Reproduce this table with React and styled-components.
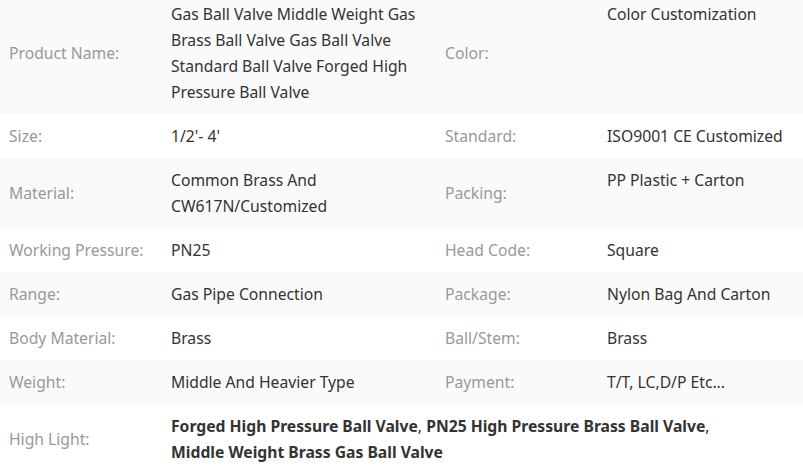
import React from "react";
import styled, { createGlobalStyle } from "styled-components";

const Global = createGlobalStyle`
  html, body { margin: 0; padding: 0; background: #fff; }
  body { font-family: "Noto Sans", "Open Sans", Arial, sans-serif; overflow: hidden; }
`;

const Sheet = styled.div`
  margin-top: -8px;
  width: 803px;
`;

const Row = styled.div`
  display: grid;
  grid-template-columns: 162px 274px 162px 1fr;
  background: ${(p) => (p.$shade ? "#fafafa" : "#ffffff")};
`;

const Label = styled.div`
  padding: 9px;
  align-self: center;
  font-size: 15.7px;
  line-height: 26px;
  color: #999999;
  white-space: nowrap;
`;

const Value = styled.div`
  padding: 9px;
  align-self: start;
  font-size: 15.7px;
  line-height: 26px;
  color: #333333;
  grid-column: ${(p) => (p.$wide ? "2 / 5" : "auto")};
`;

const HighlightText = styled.div`
  max-width: 565px;
`;

const Strong = styled.strong`
  font-weight: 700;
  color: #333333;
`;

const rows = [
  [
    "Product Name:",
    "Gas Ball Valve Middle Weight Gas Brass Ball Valve Gas Ball Valve Standard Ball Valve Forged High Pressure Ball Valve",
    "Color:",
    "Color Customization",
  ],
  ["Size:", "1/2'- 4'", "Standard:", "ISO9001 CE Customized"],
  ["Material:", "Common Brass And CW617N/Customized", "Packing:", "PP Plastic + Carton"],
  ["Working Pressure:", "PN25", "Head Code:", "Square"],
  ["Range:", "Gas Pipe Connection", "Package:", "Nylon Bag And Carton"],
  ["Body Material:", "Brass", "Ball/Stem:", "Brass"],
  ["Weight:", "Middle And Heavier Type", "Payment:", "T/T, LC,D/P Etc..."],
];

const highlights = [
  "Forged High Pressure Ball Valve",
  "PN25 High Pressure Brass Ball Valve",
  "Middle Weight Brass Gas Ball Valve",
];

export default function App() {
  return (
    <>
      <Global />
      <Sheet>
        {rows.map((r, i) => (
          <Row key={i} $shade={i % 2 === 0}>
            <Label>{r[0]}</Label>
            <Value>{r[1]}</Value>
            <Label>{r[2]}</Label>
            <Value>{r[3]}</Value>
          </Row>
        ))}
        <Row>
          <Label>High Light:</Label>
          <Value $wide>
            <HighlightText>
              {highlights.map((h, i) => (
                <React.Fragment key={h}>
                  <Strong>{h}</Strong>
                  {i < highlights.length - 1 ? ", " : ""}
                </React.Fragment>
              ))}
            </HighlightText>
          </Value>
        </Row>
      </Sheet>
    </>
  );
}
